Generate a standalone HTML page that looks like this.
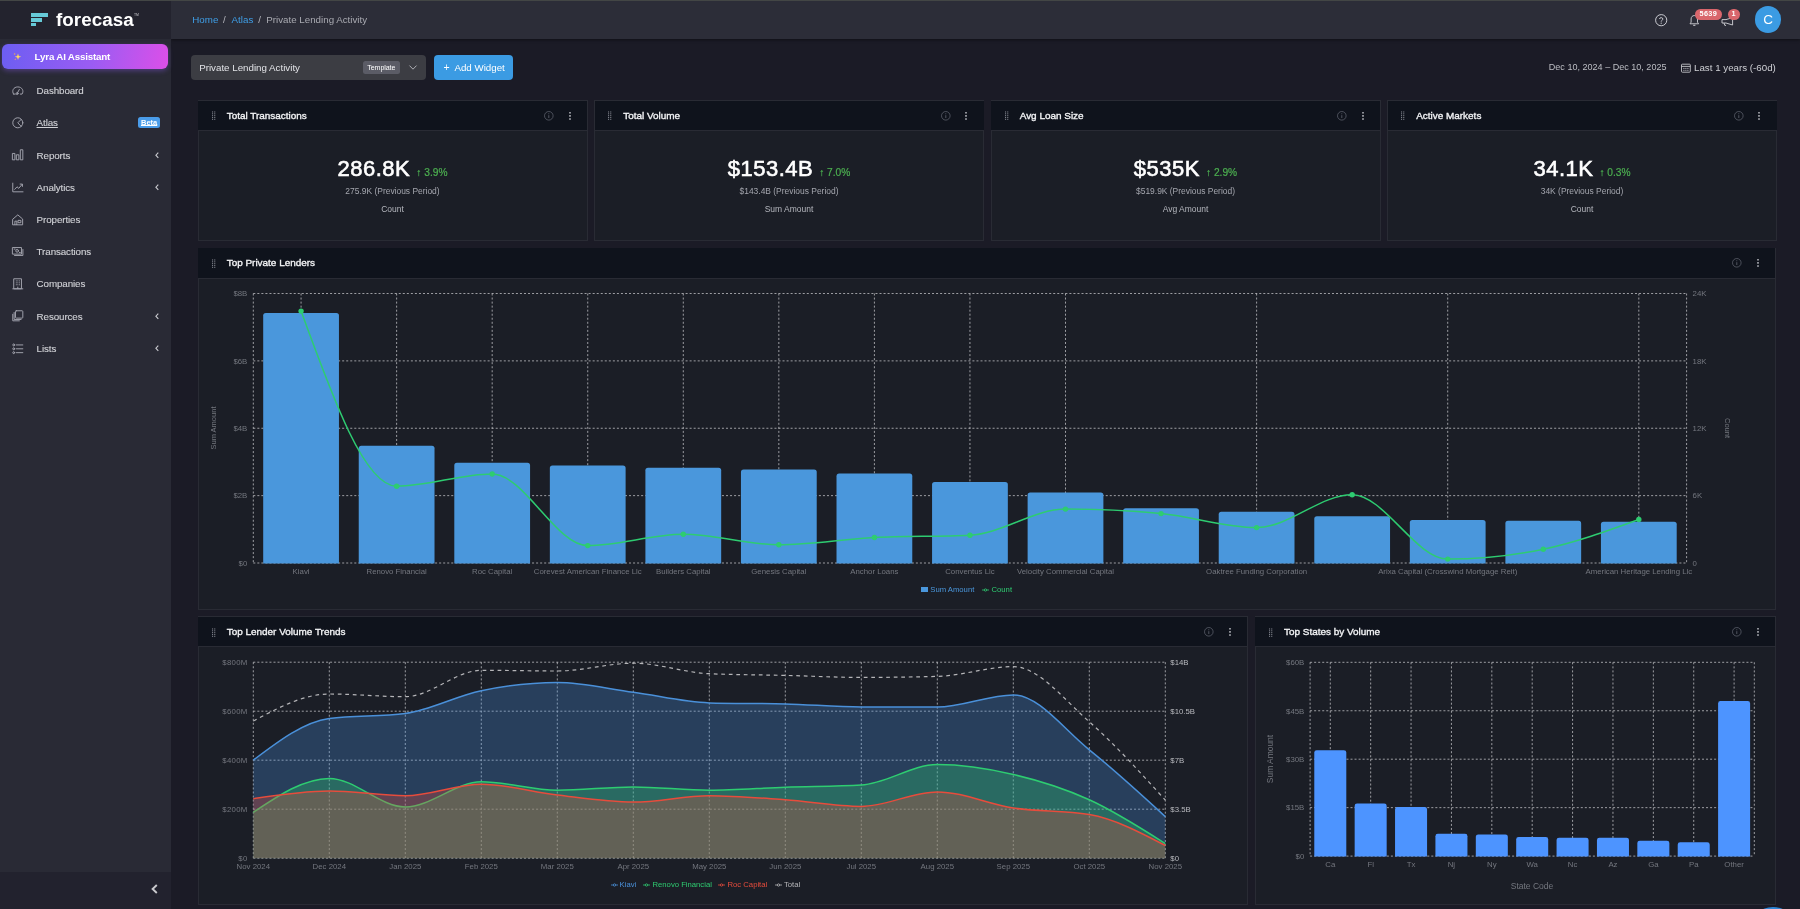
<!DOCTYPE html>
<html><head><meta charset="utf-8"><title>Forecasa - Private Lending Activity</title><style>
*{box-sizing:border-box;margin:0;padding:0}
html,body{width:1800px;height:909px;overflow:hidden;background:#1b1b26;font-family:"Liberation Sans",sans-serif;color:#d6d7dc}
.a{position:absolute}
.t{position:absolute;white-space:nowrap;line-height:1}
svg{position:absolute;overflow:visible}
#root{position:absolute;left:0;top:0;width:1800px;height:909px;overflow:hidden;will-change:transform;transform:translateZ(0)}
</style></head><body><div id="root">
<div class="a" style="left:0px;top:0px;width:1800px;height:909px;background:#1b1b26;"></div>
<div class="a" style="left:170.5px;top:0px;width:1629.5px;height:38.6px;background:#2c2d38;box-shadow:0 1px 3px rgba(0,0,0,.45);"></div>
<div class="a" style="left:0px;top:0px;width:170.5px;height:909px;background:#292a35;"></div>
<div class="a" style="left:0px;top:872px;width:170.5px;height:37px;background:#22222e;"></div>
<div class="a" style="left:0px;top:0px;width:170.5px;height:38.6px;background:#23232e;"></div>
<div class="a" style="left:0px;top:0px;width:1800px;height:1px;background:#434645;"></div>
<div class="a" style="left:31.3px;top:13px;width:16.3px;height:3.9px;background:#66cad8;"></div>
<div class="a" style="left:31.3px;top:18px;width:10.5px;height:3.8px;background:#66cad8;"></div>
<div class="a" style="left:31.3px;top:22.9px;width:5px;height:3.6px;background:#66cad8;"></div>
<div class="t" style="top:9.32px;font-size:18.8px;line-height:22.56px;color:#ffffff;font-weight:700;letter-spacing:0.05px;left:56px;">forecasa</div>
<div class="t" style="top:12.76px;font-size:3.4px;line-height:4.08px;color:#c8c8cd;font-weight:400;left:134px;">TM</div>
<div class="a" style="left:1.8px;top:44px;width:166.4px;height:25.2px;background:linear-gradient(100deg,#6c5ef2 0%,#9b5cf3 55%,#dc4fe8 100%);border-radius:6px;box-shadow:0 2px 5px rgba(140,92,240,.38);"></div>
<svg style="left:13px;top:52px" width="9" height="9" viewBox="0 0 18 18"><path d="M10 3 L11.6 7.9 L16.5 9.5 L11.6 11.1 L10 16 L8.4 11.1 L3.5 9.5 L8.4 7.9 Z" fill="#ffd95e"/><path d="M3.5 1.5 L4.2 3.3 L6 4 L4.2 4.7 L3.5 6.5 L2.8 4.7 L1 4 L2.8 3.3 Z" fill="#f6b04a"/><path d="M4.5 12.5 L5.1 14 L6.6 14.6 L5.1 15.2 L4.5 16.7 L3.9 15.2 L2.4 14.6 L3.9 14 Z" fill="#f6b04a"/></svg>
<div class="t" style="top:51.02px;font-size:9.8px;line-height:11.76px;color:#ffffff;font-weight:700;letter-spacing:-0.2px;left:34.6px;">Lyra AI Assistant</div>
<div class="t" style="top:84.92px;font-size:9.8px;line-height:11.76px;color:#d0d1d6;font-weight:400;-webkit-text-stroke:0.12px #d0d1d6;letter-spacing:-0.1px;left:36.6px;">Dashboard</div>
<div class="t" style="top:117.22px;font-size:9.8px;line-height:11.76px;color:#d0d1d6;font-weight:400;-webkit-text-stroke:0.12px #d0d1d6;letter-spacing:-0.1px;left:36.6px;text-decoration:underline;text-decoration-thickness:.7px;text-underline-offset:.6px;">Atlas</div>
<div class="t" style="top:149.52px;font-size:9.8px;line-height:11.76px;color:#d0d1d6;font-weight:400;-webkit-text-stroke:0.12px #d0d1d6;letter-spacing:-0.1px;left:36.6px;">Reports</div>
<svg style="left:155px;top:151.70000000000002px" width="4" height="6.4" viewBox="0 0 4 6.4"><path d="M3.3 .6 L.9 3.2 L3.3 5.8" fill="none" stroke="#c9cacf" stroke-width="1.1"/></svg>
<div class="t" style="top:181.82px;font-size:9.8px;line-height:11.76px;color:#d0d1d6;font-weight:400;-webkit-text-stroke:0.12px #d0d1d6;letter-spacing:-0.1px;left:36.6px;">Analytics</div>
<svg style="left:155px;top:184.0px" width="4" height="6.4" viewBox="0 0 4 6.4"><path d="M3.3 .6 L.9 3.2 L3.3 5.8" fill="none" stroke="#c9cacf" stroke-width="1.1"/></svg>
<div class="t" style="top:214.02px;font-size:9.8px;line-height:11.76px;color:#d0d1d6;font-weight:400;-webkit-text-stroke:0.12px #d0d1d6;letter-spacing:-0.1px;left:36.6px;">Properties</div>
<div class="t" style="top:246.22px;font-size:9.8px;line-height:11.76px;color:#d0d1d6;font-weight:400;-webkit-text-stroke:0.12px #d0d1d6;letter-spacing:-0.1px;left:36.6px;">Transactions</div>
<div class="t" style="top:278.42px;font-size:9.8px;line-height:11.76px;color:#d0d1d6;font-weight:400;-webkit-text-stroke:0.12px #d0d1d6;letter-spacing:-0.1px;left:36.6px;">Companies</div>
<div class="t" style="top:310.72px;font-size:9.8px;line-height:11.76px;color:#d0d1d6;font-weight:400;-webkit-text-stroke:0.12px #d0d1d6;letter-spacing:-0.1px;left:36.6px;">Resources</div>
<svg style="left:155px;top:312.90000000000003px" width="4" height="6.4" viewBox="0 0 4 6.4"><path d="M3.3 .6 L.9 3.2 L3.3 5.8" fill="none" stroke="#c9cacf" stroke-width="1.1"/></svg>
<div class="t" style="top:343.02px;font-size:9.8px;line-height:11.76px;color:#d0d1d6;font-weight:400;-webkit-text-stroke:0.12px #d0d1d6;letter-spacing:-0.1px;left:36.6px;">Lists</div>
<svg style="left:155px;top:345.2px" width="4" height="6.4" viewBox="0 0 4 6.4"><path d="M3.3 .6 L.9 3.2 L3.3 5.8" fill="none" stroke="#c9cacf" stroke-width="1.1"/></svg>
<div class="a" style="left:138px;top:117.3px;width:22.2px;height:10.6px;background:#4a9ce9;border-radius:2.5px;"></div>
<div class="t" style="top:118.40px;font-size:7.5px;line-height:9.0px;color:#ffffff;font-weight:700;left:149.1px;transform:translateX(-50%);text-decoration:underline;text-decoration-thickness:.5px;text-underline-offset:.4px;">Beta</div>
<svg style="left:11.9px;top:84.5px" width="11.6" height="11.6" viewBox="0 0 12 12" fill="none" stroke="#a3a4ae" stroke-width="1" stroke-linejoin="round" stroke-linecap="round"><path d="M1.6 9.4 C-.6 6 1.6 2 6 2 C10.4 2 12.6 6 10.4 9.4 L8.6 9.4 M3.4 9.4 L1.6 9.4"/><path d="M5.4 8.6 L7.6 4.6"/><circle cx="5.3" cy="8.9" r="1"/></svg>
<svg style="left:11.9px;top:116.8px" width="11.6" height="11.6" viewBox="0 0 12 12" fill="none" stroke="#a3a4ae" stroke-width="1" stroke-linejoin="round" stroke-linecap="round"><circle cx="6" cy="6" r="5.2"/><path d="M9.6 2.4 L6 6 L9.6 9.8"/></svg>
<svg style="left:11.9px;top:149.1px" width="11.6" height="11.6" viewBox="0 0 12 12" fill="none" stroke="#a3a4ae" stroke-width="1" stroke-linejoin="round" stroke-linecap="round"><rect x=".8" y="4.6" width="2.2" height="6.6"/><rect x="4.9" y="6" width="2.2" height="5.2"/><rect x="9" y=".8" width="2.2" height="10.4"/></svg>
<svg style="left:11.9px;top:181.39999999999998px" width="11.6" height="11.6" viewBox="0 0 12 12" fill="none" stroke="#a3a4ae" stroke-width="1" stroke-linejoin="round" stroke-linecap="round"><path d="M.8 2.2 L.8 11.2 L11.4 11.2"/><path d="M2.8 8.6 L5.2 6 L7 7.6 L10.6 3.4"/><path d="M8.4 3.2 L10.8 3.2 L10.8 5.6"/></svg>
<svg style="left:11.9px;top:213.6px" width="11.6" height="11.6" viewBox="0 0 12 12" fill="none" stroke="#a3a4ae" stroke-width="1" stroke-linejoin="round" stroke-linecap="round"><path d="M1 5.2 L6 .9 L11 5.2 L11 11.2 L1 11.2 Z"/><path d="M3 11 L3 7.4 L5 7.4 L5 11"/><rect x="6.6" y="6.6" width="2.6" height="2.4"/></svg>
<svg style="left:11.9px;top:245.79999999999998px" width="11.6" height="11.6" viewBox="0 0 12 12" fill="none" stroke="#a3a4ae" stroke-width="1" stroke-linejoin="round" stroke-linecap="round"><rect x=".8" y="1.6" width="9" height="6.8"/><path d="M2.6 9.8 L11.3 9.8 L11.3 3.6"/><circle cx="5.3" cy="5" r="1.4"/><path d="M2.2 3.2h1M7.6 6.8h1"/></svg>
<svg style="left:11.9px;top:278.0px" width="11.6" height="11.6" viewBox="0 0 12 12" fill="none" stroke="#a3a4ae" stroke-width="1" stroke-linejoin="round" stroke-linecap="round"><rect x="2.2" y=".8" width="7.6" height="10.4"/><path d="M.8 11.2 L11.2 11.2"/><path d="M4.4 3h.1M6 3h.1M7.6 3h.1M4.4 5h.1M6 5h.1M7.6 5h.1M4.4 7h.1M6 7h.1M7.6 7h.1M6 9.4v1.6"/></svg>
<svg style="left:11.9px;top:310.3px" width="11.6" height="11.6" viewBox="0 0 12 12" fill="none" stroke="#a3a4ae" stroke-width="1" stroke-linejoin="round" stroke-linecap="round"><rect x="3.6" y=".8" width="7.6" height="7.6" rx=".8"/><path d="M2.2 2.6 L2.2 9.8 L9.4 9.8"/><path d="M.8 4.4 L.8 11.2 L7.6 11.2"/></svg>
<svg style="left:11.9px;top:342.59999999999997px" width="11.6" height="11.6" viewBox="0 0 12 12" fill="none" stroke="#a3a4ae" stroke-width="1" stroke-linejoin="round" stroke-linecap="round"><circle cx="1.8" cy="2" r="1"/><circle cx="1.8" cy="6" r="1"/><circle cx="1.8" cy="10" r="1"/><path d="M4.6 2 L11.2 2 M4.6 6 L11.2 6 M4.6 10 L11.2 10"/></svg>
<svg style="left:151px;top:883.5px" width="7" height="10" viewBox="0 0 7 10"><path d="M5.8 1 L1.6 5 L5.8 9" fill="none" stroke="#c9c9cd" stroke-width="1.9"/></svg>
<div class="t" style="top:14.15px;font-size:9.75px;line-height:11.7px;color:#3f9ee6;font-weight:400;left:192.3px;">Home</div>
<div class="t" style="top:14.15px;font-size:9.75px;line-height:11.7px;color:#b4b5bb;font-weight:400;left:223.1px;">/</div>
<div class="t" style="top:14.15px;font-size:9.75px;line-height:11.7px;color:#3f9ee6;font-weight:400;left:231.6px;">Atlas</div>
<div class="t" style="top:14.15px;font-size:9.75px;line-height:11.7px;color:#b4b5bb;font-weight:400;left:258.2px;">/</div>
<div class="t" style="top:14.15px;font-size:9.75px;line-height:11.7px;color:#a9aab1;font-weight:400;left:266.3px;">Private Lending Activity</div>
<svg style="left:1654.7px;top:13.8px" width="12.4" height="12.4" viewBox="0 0 12.4 12.4"><circle cx="6.2" cy="6.2" r="5.6" fill="none" stroke="#c9cad0" stroke-width="1"/><path d="M4.5 5 C4.5 3.2 7.9 3.2 7.9 5 C7.9 6.3 6.2 6.2 6.2 7.6" fill="none" stroke="#c9cad0" stroke-width="1"/><circle cx="6.2" cy="9.2" r=".65" fill="#c9cad0"/></svg>
<svg style="left:1688.8px;top:13.6px" width="10.6" height="12.6" viewBox="0 0 10.6 12.6"><path d="M1 9.8 L9.6 9.8 L8.5 8.2 L8.5 5 C8.5 .4 2.1 .4 2.1 5 L2.1 8.2 Z" fill="none" stroke="#c9cad0" stroke-width=".95" stroke-linejoin="round"/><path d="M4.2 11.3 L6.4 11.3" stroke="#c9cad0" stroke-width="1.1"/></svg>
<svg style="left:1720.8px;top:16.8px" width="13" height="9" viewBox="0 0 13 9"><path d="M1 2.6 L5 2.6 L11.6 .6 L11.6 8 L5 6 L1 6 Z" fill="none" stroke="#c9cad0" stroke-width=".95" stroke-linejoin="round"/><path d="M3 6 L3.8 8.4 L5 8.4" fill="none" stroke="#c9cad0" stroke-width=".95"/></svg>
<div class="a" style="left:1694.5px;top:8.9px;width:27.6px;height:10.8px;background:#d9666c;border-radius:5.4px;"></div>
<div class="t" style="top:10.42px;font-size:7.3px;line-height:8.76px;color:#fff;font-weight:700;letter-spacing:0.3px;left:1708.3px;transform:translateX(-50%);">5639</div>
<div class="a" style="left:1727.6px;top:8.9px;width:12.1px;height:10.8px;background:#d9666c;border-radius:5.4px;"></div>
<div class="t" style="top:10.42px;font-size:7.3px;line-height:8.76px;color:#fff;font-weight:700;left:1733.6px;transform:translateX(-50%);">1</div>
<div class="a" style="left:1754.7px;top:6.2px;width:26.8px;height:26.8px;background:#3b9be3;border-radius:50%;"></div>
<div class="t" style="top:11.70px;font-size:13.5px;line-height:16.2px;color:#fff;font-weight:400;left:1768.1px;transform:translateX(-50%);">C</div>
<div class="a" style="left:191px;top:55.2px;width:235px;height:24.6px;background:#3c3d43;border-radius:4px;"></div>
<div class="t" style="top:61.75px;font-size:9.75px;line-height:11.7px;color:#e2e3e7;font-weight:400;left:199.2px;">Private Lending Activity</div>
<div class="a" style="left:362.5px;top:60.9px;width:37.6px;height:13px;background:#5b5c66;border-radius:2.5px;"></div>
<div class="t" style="top:63.64px;font-size:7.1px;line-height:8.52px;color:#ffffff;font-weight:400;letter-spacing:-0.1px;left:381.3px;transform:translateX(-50%);">Template</div>
<svg style="left:408.6px;top:65px" width="8" height="5" viewBox="0 0 8 5"><path d="M.5 .6 L4 4.2 L7.5 .6" fill="none" stroke="#b9bac0" stroke-width=".9"/></svg>
<div class="a" style="left:433.8px;top:55.2px;width:79.6px;height:24.6px;background:#3b9be3;border-radius:4px;"></div>
<div class="t" style="top:61.10px;font-size:10.5px;line-height:12.6px;color:#fff;font-weight:400;left:443.5px;">+</div>
<div class="t" style="top:61.75px;font-size:9.75px;line-height:11.7px;color:#fff;font-weight:400;left:454.4px;">Add Widget</div>
<div class="t" style="top:62.37px;font-size:9.05px;line-height:10.86px;color:#bdbec4;font-weight:400;left:1548.8px;">Dec 10, 2024 – Dec 10, 2025</div>
<svg style="left:1681px;top:62.6px" width="9.8" height="9.8" viewBox="0 0 9.8 9.8"><rect x=".5" y="1.2" width="8.8" height="8" rx=".8" fill="none" stroke="#c4c5ca" stroke-width=".9"/><path d="M.5 3.4 L9.3 3.4" stroke="#c4c5ca" stroke-width=".9"/><path d="M2.3 5.4h1.2M4.3 5.4h1.2M6.3 5.4h1.2M2.3 7.3h1.2M4.3 7.3h1.2M6.3 7.3h1.2" stroke="#c4c5ca" stroke-width=".9"/></svg>
<div class="t" style="top:61.95px;font-size:9.75px;line-height:11.7px;color:#cfd0d5;font-weight:400;left:1694px;">Last 1 years (-60d)</div>
<div class="a" style="left:197.5px;top:100px;width:390.0px;height:140.5px;background:#1b1e26;border:1px solid #292b34;"></div>
<div class="a" style="left:198.0px;top:100.5px;width:389.0px;height:30.6px;background:#0f131c;border-bottom:1px solid #292b34;"></div>
<svg style="left:211.7px;top:111.19999999999999px" width="3.4" height="9.4" viewBox="0 0 3.4 9.4" fill="#7c7f88"><rect x="0" y="0.4" width="1.1" height="1.1"/><rect x="2.2" y="0.4" width="1.1" height="1.1"/><rect x="0" y="2.25" width="1.1" height="1.1"/><rect x="2.2" y="2.25" width="1.1" height="1.1"/><rect x="0" y="4.1000000000000005" width="1.1" height="1.1"/><rect x="2.2" y="4.1000000000000005" width="1.1" height="1.1"/><rect x="0" y="5.950000000000001" width="1.1" height="1.1"/><rect x="2.2" y="5.950000000000001" width="1.1" height="1.1"/><rect x="0" y="7.800000000000001" width="1.1" height="1.1"/><rect x="2.2" y="7.800000000000001" width="1.1" height="1.1"/></svg>
<div class="t" style="top:109.63px;font-size:9.95px;line-height:11.94px;color:#f2f3f5;font-weight:400;-webkit-text-stroke:0.35px #f2f3f5;left:226.7px;">Total Transactions</div>
<svg style="left:544.2px;top:110.8px" width="9.6" height="9.6" viewBox="0 0 9.6 9.6"><circle cx="4.8" cy="4.8" r="4.3" fill="none" stroke="#5a5e6a" stroke-width=".8"/><path d="M4.8 4.2 L4.8 7" stroke="#5a5e6a" stroke-width=".9"/><circle cx="4.8" cy="2.8" r=".55" fill="#5a5e6a"/></svg>
<svg style="left:568.5px;top:111.6px" width="2" height="8" viewBox="0 0 2 8" fill="#c4c6cc"><rect x=".2" y="0" width="1.6" height="1.6" rx=".4"/><rect x=".2" y="3.1" width="1.6" height="1.6" rx=".4"/><rect x=".2" y="6.2" width="1.6" height="1.6" rx=".4"/></svg>
<div class="t" style="left:392.5px;top:154.6px;transform:translateX(-50%);line-height:28px;height:28px"><span style="font-size:22px;letter-spacing:.5px;color:#fff;-webkit-text-stroke:.6px #fff;vertical-align:baseline">286.8K</span><span style="font-size:10.2px;color:#4caf50;margin-left:6px;-webkit-text-stroke:.2px #4caf50">&#8593; 3.9%</span></div>
<div class="t" style="top:186.13px;font-size:8.45px;line-height:10.14px;color:#a4a6ae;font-weight:400;left:392.5px;transform:translateX(-50%);">275.9K (Previous Period)</div>
<div class="t" style="top:204.10px;font-size:8.5px;line-height:10.2px;color:#b4b6bd;font-weight:400;left:392.5px;transform:translateX(-50%);">Count</div>
<div class="a" style="left:594px;top:100px;width:390px;height:140.5px;background:#1b1e26;border:1px solid #292b34;"></div>
<div class="a" style="left:594.5px;top:100.5px;width:389px;height:30.6px;background:#0f131c;border-bottom:1px solid #292b34;"></div>
<svg style="left:608.2px;top:111.19999999999999px" width="3.4" height="9.4" viewBox="0 0 3.4 9.4" fill="#7c7f88"><rect x="0" y="0.4" width="1.1" height="1.1"/><rect x="2.2" y="0.4" width="1.1" height="1.1"/><rect x="0" y="2.25" width="1.1" height="1.1"/><rect x="2.2" y="2.25" width="1.1" height="1.1"/><rect x="0" y="4.1000000000000005" width="1.1" height="1.1"/><rect x="2.2" y="4.1000000000000005" width="1.1" height="1.1"/><rect x="0" y="5.950000000000001" width="1.1" height="1.1"/><rect x="2.2" y="5.950000000000001" width="1.1" height="1.1"/><rect x="0" y="7.800000000000001" width="1.1" height="1.1"/><rect x="2.2" y="7.800000000000001" width="1.1" height="1.1"/></svg>
<div class="t" style="top:109.63px;font-size:9.95px;line-height:11.94px;color:#f2f3f5;font-weight:400;-webkit-text-stroke:0.35px #f2f3f5;left:623.2px;">Total Volume</div>
<svg style="left:940.7px;top:110.8px" width="9.6" height="9.6" viewBox="0 0 9.6 9.6"><circle cx="4.8" cy="4.8" r="4.3" fill="none" stroke="#5a5e6a" stroke-width=".8"/><path d="M4.8 4.2 L4.8 7" stroke="#5a5e6a" stroke-width=".9"/><circle cx="4.8" cy="2.8" r=".55" fill="#5a5e6a"/></svg>
<svg style="left:965px;top:111.6px" width="2" height="8" viewBox="0 0 2 8" fill="#c4c6cc"><rect x=".2" y="0" width="1.6" height="1.6" rx=".4"/><rect x=".2" y="3.1" width="1.6" height="1.6" rx=".4"/><rect x=".2" y="6.2" width="1.6" height="1.6" rx=".4"/></svg>
<div class="t" style="left:789.0px;top:154.6px;transform:translateX(-50%);line-height:28px;height:28px"><span style="font-size:22px;letter-spacing:.5px;color:#fff;-webkit-text-stroke:.6px #fff;vertical-align:baseline">$153.4B</span><span style="font-size:10.2px;color:#4caf50;margin-left:6px;-webkit-text-stroke:.2px #4caf50">&#8593; 7.0%</span></div>
<div class="t" style="top:186.13px;font-size:8.45px;line-height:10.14px;color:#a4a6ae;font-weight:400;left:789.0px;transform:translateX(-50%);">$143.4B (Previous Period)</div>
<div class="t" style="top:204.10px;font-size:8.5px;line-height:10.2px;color:#b4b6bd;font-weight:400;left:789.0px;transform:translateX(-50%);">Sum Amount</div>
<div class="a" style="left:990.5px;top:100px;width:390.0px;height:140.5px;background:#1b1e26;border:1px solid #292b34;"></div>
<div class="a" style="left:991.0px;top:100.5px;width:389.0px;height:30.6px;background:#0f131c;border-bottom:1px solid #292b34;"></div>
<svg style="left:1004.7px;top:111.19999999999999px" width="3.4" height="9.4" viewBox="0 0 3.4 9.4" fill="#7c7f88"><rect x="0" y="0.4" width="1.1" height="1.1"/><rect x="2.2" y="0.4" width="1.1" height="1.1"/><rect x="0" y="2.25" width="1.1" height="1.1"/><rect x="2.2" y="2.25" width="1.1" height="1.1"/><rect x="0" y="4.1000000000000005" width="1.1" height="1.1"/><rect x="2.2" y="4.1000000000000005" width="1.1" height="1.1"/><rect x="0" y="5.950000000000001" width="1.1" height="1.1"/><rect x="2.2" y="5.950000000000001" width="1.1" height="1.1"/><rect x="0" y="7.800000000000001" width="1.1" height="1.1"/><rect x="2.2" y="7.800000000000001" width="1.1" height="1.1"/></svg>
<div class="t" style="top:109.63px;font-size:9.95px;line-height:11.94px;color:#f2f3f5;font-weight:400;-webkit-text-stroke:0.35px #f2f3f5;left:1019.7px;">Avg Loan Size</div>
<svg style="left:1337.2px;top:110.8px" width="9.6" height="9.6" viewBox="0 0 9.6 9.6"><circle cx="4.8" cy="4.8" r="4.3" fill="none" stroke="#5a5e6a" stroke-width=".8"/><path d="M4.8 4.2 L4.8 7" stroke="#5a5e6a" stroke-width=".9"/><circle cx="4.8" cy="2.8" r=".55" fill="#5a5e6a"/></svg>
<svg style="left:1361.5px;top:111.6px" width="2" height="8" viewBox="0 0 2 8" fill="#c4c6cc"><rect x=".2" y="0" width="1.6" height="1.6" rx=".4"/><rect x=".2" y="3.1" width="1.6" height="1.6" rx=".4"/><rect x=".2" y="6.2" width="1.6" height="1.6" rx=".4"/></svg>
<div class="t" style="left:1185.5px;top:154.6px;transform:translateX(-50%);line-height:28px;height:28px"><span style="font-size:22px;letter-spacing:.5px;color:#fff;-webkit-text-stroke:.6px #fff;vertical-align:baseline">$535K</span><span style="font-size:10.2px;color:#4caf50;margin-left:6px;-webkit-text-stroke:.2px #4caf50">&#8593; 2.9%</span></div>
<div class="t" style="top:186.13px;font-size:8.45px;line-height:10.14px;color:#a4a6ae;font-weight:400;left:1185.5px;transform:translateX(-50%);">$519.9K (Previous Period)</div>
<div class="t" style="top:204.10px;font-size:8.5px;line-height:10.2px;color:#b4b6bd;font-weight:400;left:1185.5px;transform:translateX(-50%);">Avg Amount</div>
<div class="a" style="left:1387px;top:100px;width:390px;height:140.5px;background:#1b1e26;border:1px solid #292b34;"></div>
<div class="a" style="left:1387.5px;top:100.5px;width:389px;height:30.6px;background:#0f131c;border-bottom:1px solid #292b34;"></div>
<svg style="left:1401.2px;top:111.19999999999999px" width="3.4" height="9.4" viewBox="0 0 3.4 9.4" fill="#7c7f88"><rect x="0" y="0.4" width="1.1" height="1.1"/><rect x="2.2" y="0.4" width="1.1" height="1.1"/><rect x="0" y="2.25" width="1.1" height="1.1"/><rect x="2.2" y="2.25" width="1.1" height="1.1"/><rect x="0" y="4.1000000000000005" width="1.1" height="1.1"/><rect x="2.2" y="4.1000000000000005" width="1.1" height="1.1"/><rect x="0" y="5.950000000000001" width="1.1" height="1.1"/><rect x="2.2" y="5.950000000000001" width="1.1" height="1.1"/><rect x="0" y="7.800000000000001" width="1.1" height="1.1"/><rect x="2.2" y="7.800000000000001" width="1.1" height="1.1"/></svg>
<div class="t" style="top:109.63px;font-size:9.95px;line-height:11.94px;color:#f2f3f5;font-weight:400;-webkit-text-stroke:0.35px #f2f3f5;left:1416.2px;">Active Markets</div>
<svg style="left:1733.7px;top:110.8px" width="9.6" height="9.6" viewBox="0 0 9.6 9.6"><circle cx="4.8" cy="4.8" r="4.3" fill="none" stroke="#5a5e6a" stroke-width=".8"/><path d="M4.8 4.2 L4.8 7" stroke="#5a5e6a" stroke-width=".9"/><circle cx="4.8" cy="2.8" r=".55" fill="#5a5e6a"/></svg>
<svg style="left:1758px;top:111.6px" width="2" height="8" viewBox="0 0 2 8" fill="#c4c6cc"><rect x=".2" y="0" width="1.6" height="1.6" rx=".4"/><rect x=".2" y="3.1" width="1.6" height="1.6" rx=".4"/><rect x=".2" y="6.2" width="1.6" height="1.6" rx=".4"/></svg>
<div class="t" style="left:1582.0px;top:154.6px;transform:translateX(-50%);line-height:28px;height:28px"><span style="font-size:22px;letter-spacing:.5px;color:#fff;-webkit-text-stroke:.6px #fff;vertical-align:baseline">34.1K</span><span style="font-size:10.2px;color:#4caf50;margin-left:6px;-webkit-text-stroke:.2px #4caf50">&#8593; 0.3%</span></div>
<div class="t" style="top:186.13px;font-size:8.45px;line-height:10.14px;color:#a4a6ae;font-weight:400;left:1582.0px;transform:translateX(-50%);">34K (Previous Period)</div>
<div class="t" style="top:204.10px;font-size:8.5px;line-height:10.2px;color:#b4b6bd;font-weight:400;left:1582.0px;transform:translateX(-50%);">Count</div>
<div class="a" style="left:197.5px;top:247.5px;width:1578.2px;height:362.1px;background:#1b1e26;border:1px solid #292b34;"></div>
<div class="a" style="left:198.0px;top:248.0px;width:1577.2px;height:30.6px;background:#0f131c;border-bottom:1px solid #292b34;"></div>
<svg style="left:211.7px;top:258.70000000000005px" width="3.4" height="9.4" viewBox="0 0 3.4 9.4" fill="#7c7f88"><rect x="0" y="0.4" width="1.1" height="1.1"/><rect x="2.2" y="0.4" width="1.1" height="1.1"/><rect x="0" y="2.25" width="1.1" height="1.1"/><rect x="2.2" y="2.25" width="1.1" height="1.1"/><rect x="0" y="4.1000000000000005" width="1.1" height="1.1"/><rect x="2.2" y="4.1000000000000005" width="1.1" height="1.1"/><rect x="0" y="5.950000000000001" width="1.1" height="1.1"/><rect x="2.2" y="5.950000000000001" width="1.1" height="1.1"/><rect x="0" y="7.800000000000001" width="1.1" height="1.1"/><rect x="2.2" y="7.800000000000001" width="1.1" height="1.1"/></svg>
<div class="t" style="top:257.13px;font-size:9.95px;line-height:11.94px;color:#f2f3f5;font-weight:400;-webkit-text-stroke:0.35px #f2f3f5;left:226.7px;">Top Private Lenders</div>
<svg style="left:1732.4px;top:258.3px" width="9.6" height="9.6" viewBox="0 0 9.6 9.6"><circle cx="4.8" cy="4.8" r="4.3" fill="none" stroke="#5a5e6a" stroke-width=".8"/><path d="M4.8 4.2 L4.8 7" stroke="#5a5e6a" stroke-width=".9"/><circle cx="4.8" cy="2.8" r=".55" fill="#5a5e6a"/></svg>
<svg style="left:1756.7px;top:259.1px" width="2" height="8" viewBox="0 0 2 8" fill="#c4c6cc"><rect x=".2" y="0" width="1.6" height="1.6" rx=".4"/><rect x=".2" y="3.1" width="1.6" height="1.6" rx=".4"/><rect x=".2" y="6.2" width="1.6" height="1.6" rx=".4"/></svg>
<svg style="left:0;top:0" width="1800" height="909"><path d="M253.3,293.5H1686.6" stroke="#c8c8cc" stroke-width="0.75" stroke-dasharray="2.02 2.02" fill="none"/><path d="M253.3,360.875H1686.6" stroke="#c8c8cc" stroke-width="0.75" stroke-dasharray="2.02 2.02" fill="none"/><path d="M253.3,428.25H1686.6" stroke="#c8c8cc" stroke-width="0.75" stroke-dasharray="2.02 2.02" fill="none"/><path d="M253.3,495.625H1686.6" stroke="#c8c8cc" stroke-width="0.75" stroke-dasharray="2.02 2.02" fill="none"/><path d="M253.3,563.0H1686.6" stroke="#c8c8cc" stroke-width="0.75" stroke-dasharray="2.02 2.02" fill="none"/><path d="M253.3,293.5V563.0" stroke="#c8c8cc" stroke-width="0.75" stroke-dasharray="2.02 2.02" fill="none"/><path d="M301.07666666666665,293.5V563.0" stroke="#c8c8cc" stroke-width="0.75" stroke-dasharray="2.02 2.02" fill="none"/><path d="M396.63,293.5V563.0" stroke="#c8c8cc" stroke-width="0.75" stroke-dasharray="2.02 2.02" fill="none"/><path d="M492.18333333333334,293.5V563.0" stroke="#c8c8cc" stroke-width="0.75" stroke-dasharray="2.02 2.02" fill="none"/><path d="M587.7366666666667,293.5V563.0" stroke="#c8c8cc" stroke-width="0.75" stroke-dasharray="2.02 2.02" fill="none"/><path d="M683.29,293.5V563.0" stroke="#c8c8cc" stroke-width="0.75" stroke-dasharray="2.02 2.02" fill="none"/><path d="M778.8433333333332,293.5V563.0" stroke="#c8c8cc" stroke-width="0.75" stroke-dasharray="2.02 2.02" fill="none"/><path d="M874.3966666666665,293.5V563.0" stroke="#c8c8cc" stroke-width="0.75" stroke-dasharray="2.02 2.02" fill="none"/><path d="M969.95,293.5V563.0" stroke="#c8c8cc" stroke-width="0.75" stroke-dasharray="2.02 2.02" fill="none"/><path d="M1065.5033333333333,293.5V563.0" stroke="#c8c8cc" stroke-width="0.75" stroke-dasharray="2.02 2.02" fill="none"/><path d="M1256.61,293.5V563.0" stroke="#c8c8cc" stroke-width="0.75" stroke-dasharray="2.02 2.02" fill="none"/><path d="M1447.7166666666665,293.5V563.0" stroke="#c8c8cc" stroke-width="0.75" stroke-dasharray="2.02 2.02" fill="none"/><path d="M1638.8233333333333,293.5V563.0" stroke="#c8c8cc" stroke-width="0.75" stroke-dasharray="2.02 2.02" fill="none"/><path d="M1686.6,293.5V563.0" stroke="#c8c8cc" stroke-width="0.75" stroke-dasharray="2.02 2.02" fill="none"/><path d="M263.19,563.5V315.50Q263.19,312.90,265.79,312.90H336.36Q338.96,312.90,338.96,315.50V563.5Z" fill="#4a97dc"/><path d="M358.74,563.5V448.30Q358.74,445.70,361.34,445.70H431.92Q434.52,445.70,434.52,448.30V563.5Z" fill="#4a97dc"/><path d="M454.30,563.5V465.40Q454.30,462.80,456.90,462.80H527.47Q530.07,462.80,530.07,465.40V563.5Z" fill="#4a97dc"/><path d="M549.85,563.5V468.10Q549.85,465.50,552.45,465.50H623.02Q625.62,465.50,625.62,468.10V563.5Z" fill="#4a97dc"/><path d="M645.40,563.5V470.30Q645.40,467.70,648.00,467.70H718.58Q721.18,467.70,721.18,470.30V563.5Z" fill="#4a97dc"/><path d="M740.96,563.5V472.10Q740.96,469.50,743.56,469.50H814.13Q816.73,469.50,816.73,472.10V563.5Z" fill="#4a97dc"/><path d="M836.51,563.5V476.20Q836.51,473.60,839.11,473.60H909.68Q912.28,473.60,912.28,476.20V563.5Z" fill="#4a97dc"/><path d="M932.06,563.5V484.70Q932.06,482.10,934.66,482.10H1005.24Q1007.84,482.10,1007.84,484.70V563.5Z" fill="#4a97dc"/><path d="M1027.62,563.5V495.10Q1027.62,492.50,1030.22,492.50H1100.79Q1103.39,492.50,1103.39,495.10V563.5Z" fill="#4a97dc"/><path d="M1123.17,563.5V510.80Q1123.17,508.20,1125.77,508.20H1196.34Q1198.94,508.20,1198.94,510.80V563.5Z" fill="#4a97dc"/><path d="M1218.72,563.5V514.40Q1218.72,511.80,1221.32,511.80H1291.90Q1294.50,511.80,1294.50,514.40V563.5Z" fill="#4a97dc"/><path d="M1314.28,563.5V518.90Q1314.28,516.30,1316.88,516.30H1387.45Q1390.05,516.30,1390.05,518.90V563.5Z" fill="#4a97dc"/><path d="M1409.83,563.5V522.50Q1409.83,519.90,1412.43,519.90H1483.00Q1485.60,519.90,1485.60,522.50V563.5Z" fill="#4a97dc"/><path d="M1505.38,563.5V523.40Q1505.38,520.80,1507.98,520.80H1578.56Q1581.16,520.80,1581.16,523.40V563.5Z" fill="#4a97dc"/><path d="M1600.94,563.5V524.30Q1600.94,521.70,1603.54,521.70H1674.11Q1676.71,521.70,1676.71,524.30V563.5Z" fill="#4a97dc"/><path d="M301.08,311.10C332.93,398.65,364.78,486.20,396.63,486.20C428.48,486.20,460.33,474.00,492.18,474.00C524.03,474.00,555.89,545.60,587.74,545.60C619.59,545.60,651.44,534.30,683.29,534.30C715.14,534.30,746.99,544.70,778.84,544.70C810.69,544.70,842.55,539.03,874.40,537.50C906.25,535.97,938.10,536.73,969.95,535.20C1001.80,533.67,1033.65,509.10,1065.50,509.10C1097.35,509.10,1129.21,510.60,1161.06,513.60C1192.91,516.60,1224.76,527.60,1256.61,527.60C1288.46,527.60,1320.31,494.70,1352.16,494.70C1384.01,494.70,1415.87,559.10,1447.72,559.10C1479.57,559.10,1511.42,555.80,1543.27,549.20C1575.12,542.60,1606.97,531.05,1638.82,519.50" fill="none" stroke="#2ecc71" stroke-width="1.5"/><circle cx="301.08" cy="311.10" r="2.7" fill="#2ecc71"/><circle cx="396.63" cy="486.20" r="2.7" fill="#2ecc71"/><circle cx="492.18" cy="474.00" r="2.7" fill="#2ecc71"/><circle cx="587.74" cy="545.60" r="2.7" fill="#2ecc71"/><circle cx="683.29" cy="534.30" r="2.7" fill="#2ecc71"/><circle cx="778.84" cy="544.70" r="2.7" fill="#2ecc71"/><circle cx="874.40" cy="537.50" r="2.7" fill="#2ecc71"/><circle cx="969.95" cy="535.20" r="2.7" fill="#2ecc71"/><circle cx="1065.50" cy="509.10" r="2.7" fill="#2ecc71"/><circle cx="1161.06" cy="513.60" r="2.7" fill="#2ecc71"/><circle cx="1256.61" cy="527.60" r="2.7" fill="#2ecc71"/><circle cx="1352.16" cy="494.70" r="2.7" fill="#2ecc71"/><circle cx="1447.72" cy="559.10" r="2.7" fill="#2ecc71"/><circle cx="1543.27" cy="549.20" r="2.7" fill="#2ecc71"/><circle cx="1638.82" cy="519.50" r="2.7" fill="#2ecc71"/></svg>
<div class="t" style="top:289.12px;font-size:7.8px;line-height:9.36px;color:#74777f;font-weight:400;left:247.3px;transform:translateX(-100%);">$8B</div>
<div class="t" style="top:356.50px;font-size:7.8px;line-height:9.36px;color:#74777f;font-weight:400;left:247.3px;transform:translateX(-100%);">$6B</div>
<div class="t" style="top:423.87px;font-size:7.8px;line-height:9.36px;color:#74777f;font-weight:400;left:247.3px;transform:translateX(-100%);">$4B</div>
<div class="t" style="top:491.25px;font-size:7.8px;line-height:9.36px;color:#74777f;font-weight:400;left:247.3px;transform:translateX(-100%);">$2B</div>
<div class="t" style="top:558.62px;font-size:7.8px;line-height:9.36px;color:#74777f;font-weight:400;left:247.3px;transform:translateX(-100%);">$0</div>
<div class="t" style="top:289.12px;font-size:7.8px;line-height:9.36px;color:#74777f;font-weight:400;left:1692.6px;">24K</div>
<div class="t" style="top:356.50px;font-size:7.8px;line-height:9.36px;color:#74777f;font-weight:400;left:1692.6px;">18K</div>
<div class="t" style="top:423.87px;font-size:7.8px;line-height:9.36px;color:#74777f;font-weight:400;left:1692.6px;">12K</div>
<div class="t" style="top:491.25px;font-size:7.8px;line-height:9.36px;color:#74777f;font-weight:400;left:1692.6px;">6K</div>
<div class="t" style="top:558.62px;font-size:7.8px;line-height:9.36px;color:#74777f;font-weight:400;left:1692.6px;">0</div>
<div class="t" style="top:566.82px;font-size:7.8px;line-height:9.36px;color:#74777f;font-weight:400;left:301.07666666666665px;transform:translateX(-50%);">Kiavi</div>
<div class="t" style="top:566.82px;font-size:7.8px;line-height:9.36px;color:#74777f;font-weight:400;left:396.63px;transform:translateX(-50%);">Renovo Financial</div>
<div class="t" style="top:566.82px;font-size:7.8px;line-height:9.36px;color:#74777f;font-weight:400;left:492.18333333333334px;transform:translateX(-50%);">Roc Capital</div>
<div class="t" style="top:566.82px;font-size:7.8px;line-height:9.36px;color:#74777f;font-weight:400;left:587.7366666666667px;transform:translateX(-50%);">Corevest American Finance Llc</div>
<div class="t" style="top:566.82px;font-size:7.8px;line-height:9.36px;color:#74777f;font-weight:400;left:683.29px;transform:translateX(-50%);">Builders Capital</div>
<div class="t" style="top:566.82px;font-size:7.8px;line-height:9.36px;color:#74777f;font-weight:400;left:778.8433333333332px;transform:translateX(-50%);">Genesis Capital</div>
<div class="t" style="top:566.82px;font-size:7.8px;line-height:9.36px;color:#74777f;font-weight:400;left:874.3966666666665px;transform:translateX(-50%);">Anchor Loans</div>
<div class="t" style="top:566.82px;font-size:7.8px;line-height:9.36px;color:#74777f;font-weight:400;left:969.95px;transform:translateX(-50%);">Conventus Llc</div>
<div class="t" style="top:566.82px;font-size:7.8px;line-height:9.36px;color:#74777f;font-weight:400;left:1065.5033333333333px;transform:translateX(-50%);">Velocity Commercial Capital</div>
<div class="t" style="top:566.82px;font-size:7.8px;line-height:9.36px;color:#74777f;font-weight:400;left:1256.61px;transform:translateX(-50%);">Oaktree Funding Corporation</div>
<div class="t" style="top:566.82px;font-size:7.8px;line-height:9.36px;color:#74777f;font-weight:400;left:1447.7166666666665px;transform:translateX(-50%);">Arixa Capital (Crosswind Mortgage Reit)</div>
<div class="t" style="top:566.82px;font-size:7.8px;line-height:9.36px;color:#74777f;font-weight:400;left:1638.8233333333333px;transform:translateX(-50%);">American Heritage Lending Llc</div>
<div class="t" style="left:213.3px;top:428.2px;font-size:7.5px;line-height:9px;color:#74777f;transform:translate(-50%,-50%) rotate(-90deg)">Sum Amount</div>
<div class="t" style="left:1726.5px;top:428.2px;font-size:7.5px;line-height:9px;color:#74777f;transform:translate(-50%,-50%) rotate(90deg)">Count</div>
<div class="a" style="left:921.2px;top:587px;width:6.8px;height:5.2px;background:#4a97dc;"></div>
<div class="t" style="top:584.58px;font-size:7.7px;line-height:9.24px;color:#4a97dc;font-weight:400;left:930.3px;">Sum Amount</div>
<svg style="left:982px;top:586.6px" width="7" height="6" viewBox="0 0 7 6"><path d="M0 3H7" stroke="#2ecc71" stroke-width=".8"/><circle cx="3.5" cy="3" r="1.15" fill="#1b1e26" stroke="#2ecc71" stroke-width=".8"/></svg>
<div class="t" style="top:584.58px;font-size:7.7px;line-height:9.24px;color:#2ecc71;font-weight:400;left:991.5px;">Count</div>
<div class="a" style="left:197.5px;top:616.4px;width:1050.2px;height:288.5px;background:#1b1e26;border:1px solid #292b34;"></div>
<div class="a" style="left:198.0px;top:616.9px;width:1049.2px;height:30.6px;background:#0f131c;border-bottom:1px solid #292b34;"></div>
<svg style="left:211.7px;top:627.6px" width="3.4" height="9.4" viewBox="0 0 3.4 9.4" fill="#7c7f88"><rect x="0" y="0.4" width="1.1" height="1.1"/><rect x="2.2" y="0.4" width="1.1" height="1.1"/><rect x="0" y="2.25" width="1.1" height="1.1"/><rect x="2.2" y="2.25" width="1.1" height="1.1"/><rect x="0" y="4.1000000000000005" width="1.1" height="1.1"/><rect x="2.2" y="4.1000000000000005" width="1.1" height="1.1"/><rect x="0" y="5.950000000000001" width="1.1" height="1.1"/><rect x="2.2" y="5.950000000000001" width="1.1" height="1.1"/><rect x="0" y="7.800000000000001" width="1.1" height="1.1"/><rect x="2.2" y="7.800000000000001" width="1.1" height="1.1"/></svg>
<div class="t" style="top:626.03px;font-size:9.95px;line-height:11.94px;color:#f2f3f5;font-weight:400;-webkit-text-stroke:0.35px #f2f3f5;left:226.7px;">Top Lender Volume Trends</div>
<svg style="left:1204.4px;top:627.2px" width="9.6" height="9.6" viewBox="0 0 9.6 9.6"><circle cx="4.8" cy="4.8" r="4.3" fill="none" stroke="#5a5e6a" stroke-width=".8"/><path d="M4.8 4.2 L4.8 7" stroke="#5a5e6a" stroke-width=".9"/><circle cx="4.8" cy="2.8" r=".55" fill="#5a5e6a"/></svg>
<svg style="left:1228.7px;top:628.0px" width="2" height="8" viewBox="0 0 2 8" fill="#c4c6cc"><rect x=".2" y="0" width="1.6" height="1.6" rx=".4"/><rect x=".2" y="3.1" width="1.6" height="1.6" rx=".4"/><rect x=".2" y="6.2" width="1.6" height="1.6" rx=".4"/></svg>
<svg style="left:0;top:0" width="1800" height="909"><path d="M253.3,662.2H1165.3" stroke="#c8c8cc" stroke-width="0.75" stroke-dasharray="2.02 2.02" fill="none"/><path d="M253.3,711.2H1165.3" stroke="#c8c8cc" stroke-width="0.75" stroke-dasharray="2.02 2.02" fill="none"/><path d="M253.3,760.2H1165.3" stroke="#c8c8cc" stroke-width="0.75" stroke-dasharray="2.02 2.02" fill="none"/><path d="M253.3,809.2H1165.3" stroke="#c8c8cc" stroke-width="0.75" stroke-dasharray="2.02 2.02" fill="none"/><path d="M253.3,858.2H1165.3" stroke="#c8c8cc" stroke-width="0.75" stroke-dasharray="2.02 2.02" fill="none"/><path d="M253.3,662.2V858.2" stroke="#c8c8cc" stroke-width="0.75" stroke-dasharray="2.02 2.02" fill="none"/><path d="M329.3,662.2V858.2" stroke="#c8c8cc" stroke-width="0.75" stroke-dasharray="2.02 2.02" fill="none"/><path d="M405.3,662.2V858.2" stroke="#c8c8cc" stroke-width="0.75" stroke-dasharray="2.02 2.02" fill="none"/><path d="M481.3,662.2V858.2" stroke="#c8c8cc" stroke-width="0.75" stroke-dasharray="2.02 2.02" fill="none"/><path d="M557.3,662.2V858.2" stroke="#c8c8cc" stroke-width="0.75" stroke-dasharray="2.02 2.02" fill="none"/><path d="M633.3,662.2V858.2" stroke="#c8c8cc" stroke-width="0.75" stroke-dasharray="2.02 2.02" fill="none"/><path d="M709.3,662.2V858.2" stroke="#c8c8cc" stroke-width="0.75" stroke-dasharray="2.02 2.02" fill="none"/><path d="M785.3,662.2V858.2" stroke="#c8c8cc" stroke-width="0.75" stroke-dasharray="2.02 2.02" fill="none"/><path d="M861.3,662.2V858.2" stroke="#c8c8cc" stroke-width="0.75" stroke-dasharray="2.02 2.02" fill="none"/><path d="M937.3,662.2V858.2" stroke="#c8c8cc" stroke-width="0.75" stroke-dasharray="2.02 2.02" fill="none"/><path d="M1013.3,662.2V858.2" stroke="#c8c8cc" stroke-width="0.75" stroke-dasharray="2.02 2.02" fill="none"/><path d="M1089.3,662.2V858.2" stroke="#c8c8cc" stroke-width="0.75" stroke-dasharray="2.02 2.02" fill="none"/><path d="M1165.3,662.2V858.2" stroke="#c8c8cc" stroke-width="0.75" stroke-dasharray="2.02 2.02" fill="none"/><path d="M253.30,760.10C278.63,740.92,303.97,721.73,329.30,718.40C354.63,715.07,379.97,716.73,405.30,713.40C430.63,710.07,455.97,695.85,481.30,690.70C506.63,685.55,531.97,682.50,557.30,682.50C582.63,682.50,607.97,688.90,633.30,692.30C658.63,695.70,683.97,702.23,709.30,702.90C734.63,703.57,759.97,703.23,785.30,703.90C810.63,704.57,835.97,707.00,861.30,707.00C886.63,707.00,911.97,707.00,937.30,707.00C962.63,707.00,987.97,694.90,1013.30,694.90C1038.63,694.90,1063.97,729.52,1089.30,749.80C1114.63,770.08,1139.97,793.34,1165.30,816.60L1165.3,858.2L253.3,858.2Z" fill="#4a90d9" fill-opacity=".3" stroke="none"/><path d="M253.30,760.10C278.63,740.92,303.97,721.73,329.30,718.40C354.63,715.07,379.97,716.73,405.30,713.40C430.63,710.07,455.97,695.85,481.30,690.70C506.63,685.55,531.97,682.50,557.30,682.50C582.63,682.50,607.97,688.90,633.30,692.30C658.63,695.70,683.97,702.23,709.30,702.90C734.63,703.57,759.97,703.23,785.30,703.90C810.63,704.57,835.97,707.00,861.30,707.00C886.63,707.00,911.97,707.00,937.30,707.00C962.63,707.00,987.97,694.90,1013.30,694.90C1038.63,694.90,1063.97,729.52,1089.30,749.80C1114.63,770.08,1139.97,793.34,1165.30,816.60" fill="none" stroke="#4a90d9" stroke-width="1.5"/><path d="M253.30,812.30C278.63,795.35,303.97,778.40,329.30,778.40C354.63,778.40,379.97,806.90,405.30,806.90C430.63,806.90,455.97,781.80,481.30,781.80C506.63,781.80,531.97,790.30,557.30,790.30C582.63,790.30,607.97,786.90,633.30,786.90C658.63,786.90,683.97,790.30,709.30,790.30C734.63,790.30,759.97,788.08,785.30,787.20C810.63,786.32,835.97,786.47,861.30,785.00C886.63,783.53,911.97,764.60,937.30,764.60C962.63,764.60,987.97,768.63,1013.30,774.50C1038.63,780.37,1063.97,788.28,1089.30,799.80C1114.63,811.32,1139.97,827.46,1165.30,843.60L1165.3,858.2L253.3,858.2Z" fill="#2ecc71" fill-opacity=".3" stroke="none"/><path d="M253.30,812.30C278.63,795.35,303.97,778.40,329.30,778.40C354.63,778.40,379.97,806.90,405.30,806.90C430.63,806.90,455.97,781.80,481.30,781.80C506.63,781.80,531.97,790.30,557.30,790.30C582.63,790.30,607.97,786.90,633.30,786.90C658.63,786.90,683.97,790.30,709.30,790.30C734.63,790.30,759.97,788.08,785.30,787.20C810.63,786.32,835.97,786.47,861.30,785.00C886.63,783.53,911.97,764.60,937.30,764.60C962.63,764.60,987.97,768.63,1013.30,774.50C1038.63,780.37,1063.97,788.28,1089.30,799.80C1114.63,811.32,1139.97,827.46,1165.30,843.60" fill="none" stroke="#2ecc71" stroke-width="1.5"/><path d="M253.30,798.70C278.63,794.85,303.97,791.00,329.30,791.00C354.63,791.00,379.97,795.70,405.30,795.70C430.63,795.70,455.97,784.20,481.30,784.20C506.63,784.20,531.97,792.02,557.30,795.00C582.63,797.98,607.97,802.10,633.30,802.10C658.63,802.10,683.97,795.70,709.30,795.70C734.63,795.70,759.97,798.02,785.30,799.80C810.63,801.58,835.97,806.40,861.30,806.40C886.63,806.40,911.97,791.90,937.30,791.90C962.63,791.90,987.97,804.22,1013.30,808.00C1038.63,811.78,1063.97,810.20,1089.30,814.60C1114.63,819.00,1139.97,832.25,1165.30,845.50L1165.3,858.2L253.3,858.2Z" fill="#e74c3c" fill-opacity=".3" stroke="none"/><path d="M253.30,798.70C278.63,794.85,303.97,791.00,329.30,791.00C354.63,791.00,379.97,795.70,405.30,795.70C430.63,795.70,455.97,784.20,481.30,784.20C506.63,784.20,531.97,792.02,557.30,795.00C582.63,797.98,607.97,802.10,633.30,802.10C658.63,802.10,683.97,795.70,709.30,795.70C734.63,795.70,759.97,798.02,785.30,799.80C810.63,801.58,835.97,806.40,861.30,806.40C886.63,806.40,911.97,791.90,937.30,791.90C962.63,791.90,987.97,804.22,1013.30,808.00C1038.63,811.78,1063.97,810.20,1089.30,814.60C1114.63,819.00,1139.97,832.25,1165.30,845.50" fill="none" stroke="#e74c3c" stroke-width="1.5"/><path d="M253.30,721.10C278.63,707.55,303.97,694.00,329.30,694.00C354.63,694.00,379.97,696.70,405.30,696.70C430.63,696.70,455.97,670.30,481.30,670.30C506.63,670.30,531.97,671.00,557.30,671.00C582.63,671.00,607.97,663.20,633.30,663.20C658.63,663.20,683.97,672.57,709.30,673.70C734.63,674.83,759.97,674.78,785.30,675.40C810.63,676.02,835.97,677.40,861.30,677.40C886.63,677.40,911.97,677.07,937.30,676.40C962.63,675.73,987.97,666.60,1013.30,666.60C1038.63,666.60,1063.97,699.55,1089.30,721.80C1114.63,744.05,1139.97,772.08,1165.30,800.10" fill="none" stroke="#b5b5b8" stroke-width="1.2" stroke-dasharray="3.75 3.75"/></svg>
<div class="t" style="top:658.02px;font-size:7.8px;line-height:9.36px;color:#74777f;font-weight:400;letter-spacing:0.3px;left:247.6px;transform:translateX(-100%);">$800M</div>
<div class="t" style="top:707.02px;font-size:7.8px;line-height:9.36px;color:#74777f;font-weight:400;letter-spacing:0.3px;left:247.6px;transform:translateX(-100%);">$600M</div>
<div class="t" style="top:756.02px;font-size:7.8px;line-height:9.36px;color:#74777f;font-weight:400;letter-spacing:0.3px;left:247.6px;transform:translateX(-100%);">$400M</div>
<div class="t" style="top:805.02px;font-size:7.8px;line-height:9.36px;color:#74777f;font-weight:400;letter-spacing:0.3px;left:247.6px;transform:translateX(-100%);">$200M</div>
<div class="t" style="top:854.02px;font-size:7.8px;line-height:9.36px;color:#74777f;font-weight:400;letter-spacing:0.3px;left:247.6px;transform:translateX(-100%);">$0</div>
<div class="t" style="top:658.02px;font-size:7.8px;line-height:9.36px;color:#b9babf;font-weight:400;left:1170.3px;">$14B</div>
<div class="t" style="top:707.02px;font-size:7.8px;line-height:9.36px;color:#b9babf;font-weight:400;left:1170.3px;">$10.5B</div>
<div class="t" style="top:756.02px;font-size:7.8px;line-height:9.36px;color:#b9babf;font-weight:400;left:1170.3px;">$7B</div>
<div class="t" style="top:805.02px;font-size:7.8px;line-height:9.36px;color:#b9babf;font-weight:400;left:1170.3px;">$3.5B</div>
<div class="t" style="top:854.02px;font-size:7.8px;line-height:9.36px;color:#b9babf;font-weight:400;left:1170.3px;">$0</div>
<div class="t" style="top:861.62px;font-size:7.8px;line-height:9.36px;color:#74777f;font-weight:400;left:253.3px;transform:translateX(-50%);">Nov 2024</div>
<div class="t" style="top:861.62px;font-size:7.8px;line-height:9.36px;color:#74777f;font-weight:400;left:329.3px;transform:translateX(-50%);">Dec 2024</div>
<div class="t" style="top:861.62px;font-size:7.8px;line-height:9.36px;color:#74777f;font-weight:400;left:405.3px;transform:translateX(-50%);">Jan 2025</div>
<div class="t" style="top:861.62px;font-size:7.8px;line-height:9.36px;color:#74777f;font-weight:400;left:481.3px;transform:translateX(-50%);">Feb 2025</div>
<div class="t" style="top:861.62px;font-size:7.8px;line-height:9.36px;color:#74777f;font-weight:400;left:557.3px;transform:translateX(-50%);">Mar 2025</div>
<div class="t" style="top:861.62px;font-size:7.8px;line-height:9.36px;color:#74777f;font-weight:400;left:633.3px;transform:translateX(-50%);">Apr 2025</div>
<div class="t" style="top:861.62px;font-size:7.8px;line-height:9.36px;color:#74777f;font-weight:400;left:709.3px;transform:translateX(-50%);">May 2025</div>
<div class="t" style="top:861.62px;font-size:7.8px;line-height:9.36px;color:#74777f;font-weight:400;left:785.3px;transform:translateX(-50%);">Jun 2025</div>
<div class="t" style="top:861.62px;font-size:7.8px;line-height:9.36px;color:#74777f;font-weight:400;left:861.3px;transform:translateX(-50%);">Jul 2025</div>
<div class="t" style="top:861.62px;font-size:7.8px;line-height:9.36px;color:#74777f;font-weight:400;left:937.3px;transform:translateX(-50%);">Aug 2025</div>
<div class="t" style="top:861.62px;font-size:7.8px;line-height:9.36px;color:#74777f;font-weight:400;left:1013.3px;transform:translateX(-50%);">Sep 2025</div>
<div class="t" style="top:861.62px;font-size:7.8px;line-height:9.36px;color:#74777f;font-weight:400;left:1089.3px;transform:translateX(-50%);">Oct 2025</div>
<div class="t" style="top:861.62px;font-size:7.8px;line-height:9.36px;color:#74777f;font-weight:400;left:1165.3px;transform:translateX(-50%);">Nov 2025</div>
<svg style="left:610.5px;top:882px" width="7" height="6" viewBox="0 0 7 6"><path d="M0 3H7" stroke="#4a90d9" stroke-width=".8"/><circle cx="3.5" cy="3" r="1.15" fill="#1b1e26" stroke="#4a90d9" stroke-width=".8"/></svg>
<div class="t" style="top:879.78px;font-size:7.7px;line-height:9.24px;color:#4a90d9;font-weight:400;left:619.6px;">Kiavi</div>
<svg style="left:643.4px;top:882px" width="7" height="6" viewBox="0 0 7 6"><path d="M0 3H7" stroke="#2ecc71" stroke-width=".8"/><circle cx="3.5" cy="3" r="1.15" fill="#1b1e26" stroke="#2ecc71" stroke-width=".8"/></svg>
<div class="t" style="top:879.78px;font-size:7.7px;line-height:9.24px;color:#2ecc71;font-weight:400;left:652.5px;">Renovo Financial</div>
<svg style="left:718.2px;top:882px" width="7" height="6" viewBox="0 0 7 6"><path d="M0 3H7" stroke="#e74c3c" stroke-width=".8"/><circle cx="3.5" cy="3" r="1.15" fill="#1b1e26" stroke="#e74c3c" stroke-width=".8"/></svg>
<div class="t" style="top:879.78px;font-size:7.7px;line-height:9.24px;color:#e74c3c;font-weight:400;left:727.5px;">Roc Capital</div>
<svg style="left:774.6px;top:882px" width="7" height="6" viewBox="0 0 7 6"><path d="M0 3H7" stroke="#b5b5b8" stroke-width=".8"/><circle cx="3.5" cy="3" r="1.15" fill="#1b1e26" stroke="#b5b5b8" stroke-width=".8"/></svg>
<div class="t" style="top:879.78px;font-size:7.7px;line-height:9.24px;color:#b5b5b8;font-weight:400;left:784px;">Total</div>
<div class="a" style="left:1254.8px;top:616.4px;width:520.9000000000001px;height:288.5px;background:#1b1e26;border:1px solid #292b34;"></div>
<div class="a" style="left:1255.3px;top:616.9px;width:519.9000000000001px;height:30.6px;background:#0f131c;border-bottom:1px solid #292b34;"></div>
<svg style="left:1269.0px;top:627.6px" width="3.4" height="9.4" viewBox="0 0 3.4 9.4" fill="#7c7f88"><rect x="0" y="0.4" width="1.1" height="1.1"/><rect x="2.2" y="0.4" width="1.1" height="1.1"/><rect x="0" y="2.25" width="1.1" height="1.1"/><rect x="2.2" y="2.25" width="1.1" height="1.1"/><rect x="0" y="4.1000000000000005" width="1.1" height="1.1"/><rect x="2.2" y="4.1000000000000005" width="1.1" height="1.1"/><rect x="0" y="5.950000000000001" width="1.1" height="1.1"/><rect x="2.2" y="5.950000000000001" width="1.1" height="1.1"/><rect x="0" y="7.800000000000001" width="1.1" height="1.1"/><rect x="2.2" y="7.800000000000001" width="1.1" height="1.1"/></svg>
<div class="t" style="top:626.03px;font-size:9.95px;line-height:11.94px;color:#f2f3f5;font-weight:400;-webkit-text-stroke:0.35px #f2f3f5;left:1284.0px;">Top States by Volume</div>
<svg style="left:1732.4px;top:627.2px" width="9.6" height="9.6" viewBox="0 0 9.6 9.6"><circle cx="4.8" cy="4.8" r="4.3" fill="none" stroke="#5a5e6a" stroke-width=".8"/><path d="M4.8 4.2 L4.8 7" stroke="#5a5e6a" stroke-width=".9"/><circle cx="4.8" cy="2.8" r=".55" fill="#5a5e6a"/></svg>
<svg style="left:1756.7px;top:628.0px" width="2" height="8" viewBox="0 0 2 8" fill="#c4c6cc"><rect x=".2" y="0" width="1.6" height="1.6" rx=".4"/><rect x=".2" y="3.1" width="1.6" height="1.6" rx=".4"/><rect x=".2" y="6.2" width="1.6" height="1.6" rx=".4"/></svg>
<svg style="left:0;top:0" width="1800" height="909"><path d="M1310.1,662.3H1754.3" stroke="#c8c8cc" stroke-width="0.75" stroke-dasharray="2.02 2.02" fill="none"/><path d="M1310.1,710.75H1754.3" stroke="#c8c8cc" stroke-width="0.75" stroke-dasharray="2.02 2.02" fill="none"/><path d="M1310.1,759.2H1754.3" stroke="#c8c8cc" stroke-width="0.75" stroke-dasharray="2.02 2.02" fill="none"/><path d="M1310.1,807.65H1754.3" stroke="#c8c8cc" stroke-width="0.75" stroke-dasharray="2.02 2.02" fill="none"/><path d="M1310.1,856.1H1754.3" stroke="#c8c8cc" stroke-width="0.75" stroke-dasharray="2.02 2.02" fill="none"/><path d="M1310.1,662.3V856.1" stroke="#c8c8cc" stroke-width="0.75" stroke-dasharray="2.02 2.02" fill="none"/><path d="M1330.290909090909,662.3V856.1" stroke="#c8c8cc" stroke-width="0.75" stroke-dasharray="2.02 2.02" fill="none"/><path d="M1370.6727272727271,662.3V856.1" stroke="#c8c8cc" stroke-width="0.75" stroke-dasharray="2.02 2.02" fill="none"/><path d="M1411.0545454545454,662.3V856.1" stroke="#c8c8cc" stroke-width="0.75" stroke-dasharray="2.02 2.02" fill="none"/><path d="M1451.4363636363635,662.3V856.1" stroke="#c8c8cc" stroke-width="0.75" stroke-dasharray="2.02 2.02" fill="none"/><path d="M1491.8181818181818,662.3V856.1" stroke="#c8c8cc" stroke-width="0.75" stroke-dasharray="2.02 2.02" fill="none"/><path d="M1532.1999999999998,662.3V856.1" stroke="#c8c8cc" stroke-width="0.75" stroke-dasharray="2.02 2.02" fill="none"/><path d="M1572.581818181818,662.3V856.1" stroke="#c8c8cc" stroke-width="0.75" stroke-dasharray="2.02 2.02" fill="none"/><path d="M1612.9636363636364,662.3V856.1" stroke="#c8c8cc" stroke-width="0.75" stroke-dasharray="2.02 2.02" fill="none"/><path d="M1653.3454545454545,662.3V856.1" stroke="#c8c8cc" stroke-width="0.75" stroke-dasharray="2.02 2.02" fill="none"/><path d="M1693.7272727272725,662.3V856.1" stroke="#c8c8cc" stroke-width="0.75" stroke-dasharray="2.02 2.02" fill="none"/><path d="M1734.1090909090908,662.3V856.1" stroke="#c8c8cc" stroke-width="0.75" stroke-dasharray="2.02 2.02" fill="none"/><path d="M1754.3,662.3V856.1" stroke="#c8c8cc" stroke-width="0.75" stroke-dasharray="2.02 2.02" fill="none"/><path d="M1314.28,856.6V752.60Q1314.28,750.20,1316.68,750.20H1343.90Q1346.30,750.20,1346.30,752.60V856.6Z" fill="#4d94ff"/><path d="M1354.66,856.6V805.90Q1354.66,803.50,1357.06,803.50H1384.28Q1386.68,803.50,1386.68,805.90V856.6Z" fill="#4d94ff"/><path d="M1395.04,856.6V809.50Q1395.04,807.10,1397.44,807.10H1424.67Q1427.07,807.10,1427.07,809.50V856.6Z" fill="#4d94ff"/><path d="M1435.42,856.6V836.20Q1435.42,833.80,1437.82,833.80H1465.05Q1467.45,833.80,1467.45,836.20V856.6Z" fill="#4d94ff"/><path d="M1475.81,856.6V836.80Q1475.81,834.40,1478.21,834.40H1505.43Q1507.83,834.40,1507.83,836.80V856.6Z" fill="#4d94ff"/><path d="M1516.19,856.6V839.40Q1516.19,837.00,1518.59,837.00H1545.81Q1548.21,837.00,1548.21,839.40V856.6Z" fill="#4d94ff"/><path d="M1556.57,856.6V840.10Q1556.57,837.70,1558.97,837.70H1586.19Q1588.59,837.70,1588.59,840.10V856.6Z" fill="#4d94ff"/><path d="M1596.95,856.6V840.10Q1596.95,837.70,1599.35,837.70H1626.58Q1628.98,837.70,1628.98,840.10V856.6Z" fill="#4d94ff"/><path d="M1637.33,856.6V843.10Q1637.33,840.70,1639.73,840.70H1666.96Q1669.36,840.70,1669.36,843.10V856.6Z" fill="#4d94ff"/><path d="M1677.72,856.6V844.70Q1677.72,842.30,1680.12,842.30H1707.34Q1709.74,842.30,1709.74,844.70V856.6Z" fill="#4d94ff"/><path d="M1718.10,856.6V703.50Q1718.10,701.10,1720.50,701.10H1747.72Q1750.12,701.10,1750.12,703.50V856.6Z" fill="#4d94ff"/></svg>
<div class="t" style="top:658.12px;font-size:7.8px;line-height:9.36px;color:#74777f;font-weight:400;left:1304.3px;transform:translateX(-100%);">$60B</div>
<div class="t" style="top:706.57px;font-size:7.8px;line-height:9.36px;color:#74777f;font-weight:400;left:1304.3px;transform:translateX(-100%);">$45B</div>
<div class="t" style="top:755.02px;font-size:7.8px;line-height:9.36px;color:#74777f;font-weight:400;left:1304.3px;transform:translateX(-100%);">$30B</div>
<div class="t" style="top:803.47px;font-size:7.8px;line-height:9.36px;color:#74777f;font-weight:400;left:1304.3px;transform:translateX(-100%);">$15B</div>
<div class="t" style="top:851.92px;font-size:7.8px;line-height:9.36px;color:#74777f;font-weight:400;left:1304.3px;transform:translateX(-100%);">$0</div>
<div class="t" style="top:859.82px;font-size:7.8px;line-height:9.36px;color:#74777f;font-weight:400;left:1330.290909090909px;transform:translateX(-50%);">Ca</div>
<div class="t" style="top:859.82px;font-size:7.8px;line-height:9.36px;color:#74777f;font-weight:400;left:1370.6727272727271px;transform:translateX(-50%);">Fl</div>
<div class="t" style="top:859.82px;font-size:7.8px;line-height:9.36px;color:#74777f;font-weight:400;left:1411.0545454545454px;transform:translateX(-50%);">Tx</div>
<div class="t" style="top:859.82px;font-size:7.8px;line-height:9.36px;color:#74777f;font-weight:400;left:1451.4363636363635px;transform:translateX(-50%);">Nj</div>
<div class="t" style="top:859.82px;font-size:7.8px;line-height:9.36px;color:#74777f;font-weight:400;left:1491.8181818181818px;transform:translateX(-50%);">Ny</div>
<div class="t" style="top:859.82px;font-size:7.8px;line-height:9.36px;color:#74777f;font-weight:400;left:1532.1999999999998px;transform:translateX(-50%);">Wa</div>
<div class="t" style="top:859.82px;font-size:7.8px;line-height:9.36px;color:#74777f;font-weight:400;left:1572.581818181818px;transform:translateX(-50%);">Nc</div>
<div class="t" style="top:859.82px;font-size:7.8px;line-height:9.36px;color:#74777f;font-weight:400;left:1612.9636363636364px;transform:translateX(-50%);">Az</div>
<div class="t" style="top:859.82px;font-size:7.8px;line-height:9.36px;color:#74777f;font-weight:400;left:1653.3454545454545px;transform:translateX(-50%);">Ga</div>
<div class="t" style="top:859.82px;font-size:7.8px;line-height:9.36px;color:#74777f;font-weight:400;left:1693.7272727272725px;transform:translateX(-50%);">Pa</div>
<div class="t" style="top:859.82px;font-size:7.8px;line-height:9.36px;color:#74777f;font-weight:400;left:1734.1090909090908px;transform:translateX(-50%);">Other</div>
<div class="t" style="top:881.30px;font-size:8.5px;line-height:10.2px;color:#74777f;font-weight:400;left:1532px;transform:translateX(-50%);">State Code</div>
<div class="t" style="left:1269.8px;top:759.2px;font-size:8.45px;line-height:10px;color:#74777f;transform:translate(-50%,-50%) rotate(-90deg)">Sum Amount</div>
<div class="a" style="left:1749px;top:907.2px;width:48px;height:48px;background:#2e86d6;border-radius:50%;"></div>
</div></body></html>
